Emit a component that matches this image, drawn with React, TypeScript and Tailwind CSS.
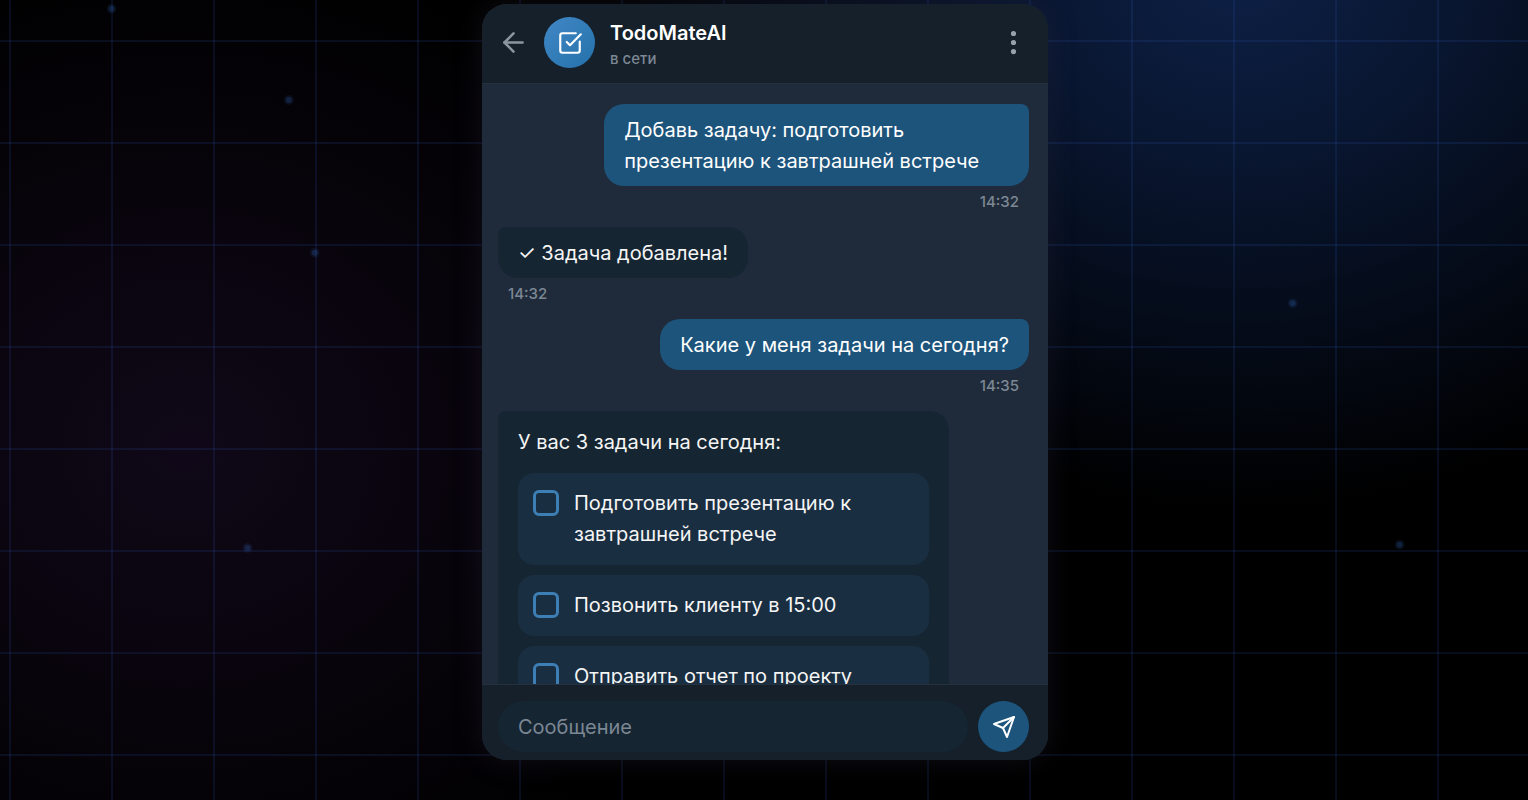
import { useState } from "react";
import { ArrowLeft, EllipsisVertical, SquareCheckBig } from "lucide-react";
import { FiSend } from "react-icons/fi";

const STARS = [
  { x: "7.3%", y: "1.1%" },
  { x: "18.9%", y: "12.5%" },
  { x: "20.6%", y: "31.6%" },
  { x: "16.2%", y: "68.5%" },
  { x: "84.6%", y: "37.9%" },
  { x: "91.6%", y: "68.1%" },
];

const TASKS = [
  "Подготовить презентацию к завтрашней встрече",
  "Позвонить клиенту в 15:00",
  "Отправить отчет по проекту",
];

interface MessageProps {
  text: string;
  time: string;
  own?: boolean;
}

function Message({ text, time, own = false }: MessageProps) {
  return (
    <div className={`flex flex-col ${own ? "items-end" : "items-start"}`}>
      <p
        className={`max-w-[80%] px-5 pt-[11px] pb-[9px] ${
          own
            ? "bg-[#1d547b] text-white rounded-[20px] rounded-tr-[8px]"
            : "bg-[#152532] text-[#f5f5f5] rounded-[20px] rounded-tl-[8px]"
        }`}
      >
        {text}
      </p>
      <time className="mt-1.5 px-2.5 text-[15px] leading-5 font-medium text-[#7c8794]">{time}</time>
    </div>
  );
}

function TaskList() {
  const [done, setDone] = useState<string[]>([]);

  function toggle(task: string) {
    setDone(done.includes(task) ? done.filter(t => t !== task) : [...done, task]);
  }

  return (
    <div className="w-[85%] px-5 py-4 bg-[#152532] text-[#f5f5f5] rounded-[20px] rounded-tl-[8px]">
      <p>У вас 3 задачи на сегодня:</p>
      <ul className="mt-[15px] flex flex-col gap-2.5">
        {TASKS.map(task => (
          <li key={task}>
            <label className="flex items-start gap-[15px] p-[15px] rounded-[16px] bg-[#1a2e41] cursor-pointer">
              <input
                type="checkbox"
                checked={done.includes(task)}
                onChange={() => toggle(task)}
                className="appearance-none shrink-0 mt-0.5 size-[26px] rounded-[6px] border-[3px] border-[#3d7fb5] checked:bg-[#3d7fb5]"
              />
              <span>{task}</span>
            </label>
          </li>
        ))}
      </ul>
    </div>
  );
}

function Backdrop() {
  return (
    <div className="absolute inset-0 -z-10 bg-[radial-gradient(ellipse_620px_540px_at_81%_-4%,#0d2046,#091630_35%,transparent),radial-gradient(ellipse_560px_500px_at_12%_56%,#100818,transparent)]">
      <div className="absolute inset-0 bg-[linear-gradient(to_right,#3563d621_2px,transparent_2px),linear-gradient(to_bottom,#3563d621_2px,transparent_2px)] bg-[size:102px_102px] bg-[position:9px_40px]" />
      <svg className="absolute inset-0 size-full" aria-hidden="true">
        {STARS.map(star => (
          <g key={star.x} fill="#2f5fb0">
            <circle cx={star.x} cy={star.y} r="5" opacity="0.12" />
            <circle cx={star.x} cy={star.y} r="3" opacity="0.25" />
          </g>
        ))}
      </svg>
    </div>
  );
}

export default function App() {
  const [draft, setDraft] = useState("");

  return (
    <div className="relative isolate h-screen overflow-hidden bg-black pt-1 pb-10 pl-0.5 font-['Inter','Noto_Sans',sans-serif] text-[20px] leading-[31px]">
      <Backdrop />
      <main className="mx-auto flex h-full w-full max-w-[566px] flex-col overflow-hidden rounded-[25px] bg-[#1f2b3a] shadow-[0_0_30px_#2d2b4055]">
        <header className="flex h-20 shrink-0 items-center gap-[15px] border-b border-[#25323e] bg-[#15202a] pr-[19px] pl-4 pb-0.5">
          <button type="button" aria-label="Назад" className="text-[#8b959f]">
            <ArrowLeft size={31} />
          </button>
          <div className="flex size-[51px] items-center justify-center rounded-full bg-linear-to-br from-[#4088c6] to-[#2471ab] text-white">
            <SquareCheckBig size={26} />
          </div>
          <div className="flex-1 pt-1">
            <h1 className="text-[20px] leading-7 font-semibold text-white">TodoMateAI</h1>
            <p className="text-[15px] leading-6 font-medium text-[#7c8794]">в сети</p>
          </div>
          <button type="button" aria-label="Меню" className="text-[#98a1ab]">
            <EllipsisVertical size={31} />
          </button>
        </header>

        <section className="flex min-h-0 flex-1 flex-col gap-[15px] overflow-hidden pt-5 pr-[19px] pl-4">
          <Message own text="Добавь задачу: подготовить презентацию к завтрашней встрече" time="14:32" />
          <Message text="✓ Задача добавлена!" time="14:32" />
          <Message own text="Какие у меня задачи на сегодня?" time="14:35" />
          <TaskList />
        </section>

        <form
          onSubmit={e => e.preventDefault()}
          className="flex shrink-0 items-center gap-2.5 border-t border-[#25323e] bg-[#15202a] pt-4 pr-[19px] pb-2 pl-4"
        >
          <input
            type="text"
            aria-label="Сообщение"
            placeholder="Сообщение"
            value={draft}
            onChange={e => setDraft(e.target.value)}
            className="h-[51px] min-w-0 flex-1 rounded-full bg-[#152532] px-5 text-white placeholder:text-[#7c8794] focus:outline-none"
          />
          <button
            type="submit"
            aria-label="Отправить"
            className="flex size-[51px] items-center justify-center rounded-full bg-[#1d547b] text-white"
          >
            <FiSend size={24} />
          </button>
        </form>
      </main>
    </div>
  );
}
